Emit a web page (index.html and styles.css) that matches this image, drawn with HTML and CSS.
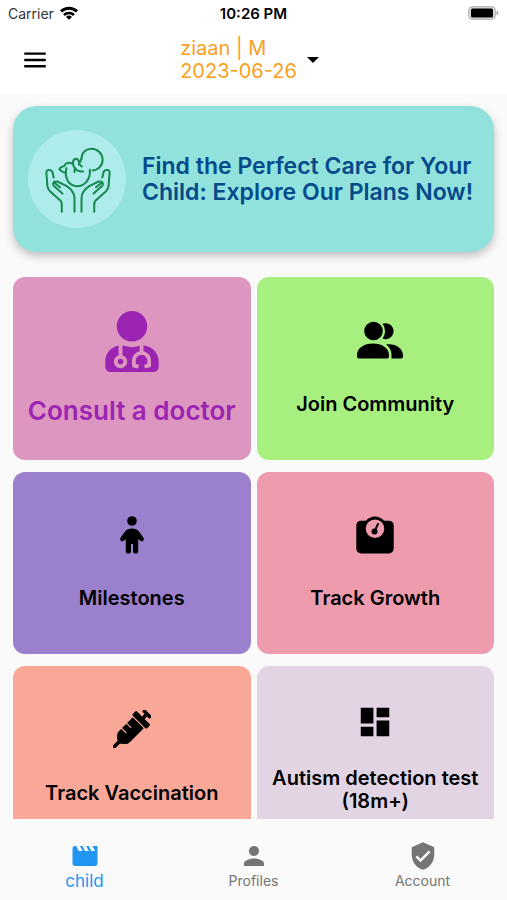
FILE: index.html
```html
<!DOCTYPE html>
<html lang="en">
<head>
<meta charset="utf-8">
<meta name="viewport" content="width=device-width, initial-scale=1">
<title>Child</title>
<link rel="stylesheet" href="styles.css">
</head>
<body>
<div class="status">
  <div class="carrier">Carrier
    <svg width="18" height="14" viewBox="0 0 18 14" fill="none" stroke="#000" stroke-width="3"><path d="M1 5.4a11.6 11.6 0 0 1 16 0"/><path d="M4 9a7.2 7.2 0 0 1 10 0" stroke-width="2.6"/><path d="M9 13.8 6 10.9a4.3 4.3 0 0 1 6 0z" fill="#000" stroke="none"/></svg>
  </div>
  <div class="time">10:26 PM</div>
  <div class="battery">
    <svg width="31" height="14" viewBox="0 0 31 14"><rect x=".7" y=".7" width="26.6" height="12.6" rx="3.6" fill="#ddd" stroke="#aaa"/><rect x="3" y="2.4" width="22" height="9.2" rx="1.6"/><path d="M28.5 4.5c2.6.8 2.6 4.2 0 5z" fill="#aaa"/></svg>
  </div>
</div>
<header class="bar">
  <button class="plain menu" aria-label="Menu">
    <svg width="22" height="16" viewBox="0 0 22 16" stroke="#000" stroke-width="2.4" stroke-linecap="round"><path d="M1.2 1.6h19.6M1.2 8h19.6M1.2 14.2h19.6"/></svg>
  </button>
  <button class="plain picker">
    <span>ziaan | M<br>2023-06-26</span>
    <svg width="12" height="6" viewBox="0 0 12 6"><path d="M0 0h12L6 6z"/></svg>
  </button>
</header>
<main class="content">
  <a class="banner" href="#plans">
    <span class="badge">
      <svg width="67" height="67" viewBox="130 150 200 200" fill="none" stroke="#16894f" stroke-width="6" stroke-linecap="round" stroke-linejoin="round">
        <path d="M242 188C242 168 256 158 272 158A33 33 0 0 1 305 191C305 208 292 222 275 223"/>
        <path d="M267 221C269 249 252 270 228 270C203 269 190 243 197 216"/>
        <path d="M192 229C184 231 183 222 176 220C176 213 184 212 190 210C193 202 204 196 214 203"/>
        <path d="M221 228L222 215C213 206 215 188 226 188C235 188 234 199 236 205L243 211M222 215C228 225 238 227 247 226M234 205C237 198 240 193 242 188"/>
        <g id="hand"><path d="M159 244L155 227C151 220 138 220 137 228L140 268C141 276 143 280 147 284L178 312C182 316 183 318 183 324V346"/><path d="M185 292L159 269C154 260 160 255 170 256L198 270C214 281 221 290 221 305V346M159 258L178 273"/></g>
        <use href="#hand" transform="translate(463 0) scale(-1 1)"/>
      </svg>
    </span>
    <span class="pitch">Find the Perfect Care for Your Child: Explore Our Plans Now!</span>
  </a>
  <nav class="grid" aria-label="Services">
    <a class="card consult" href="#consult">
      <svg width="54" height="61" viewBox="0 0 448 512"><path d="M224 256c70.7 0 128-57.3 128-128S294.7 0 224 0 96 57.3 96 128s57.3 128 128 128zM104 424c0 13.3 10.7 24 24 24s24-10.7 24-24-10.7-24-24-24-24 10.7-24 24zm216-135.4v49c36.5 7.4 64 39.8 64 78.4v41.7c0 7.6-5.4 14.2-12.9 15.7l-32.2 6.4c-4.3.9-8.5-1.9-9.4-6.3l-3.1-15.7c-.9-4.3 1.9-8.6 6.3-9.4l19.3-3.9V416c0-62.8-96-65.1-96 1.9v26.7l19.3 3.9c4.3.9 7.1 5.1 6.3 9.4l-3.1 15.7c-.9 4.3-5.1 7.1-9.4 6.3l-31.2-4.2c-7.9-1.1-13.8-7.8-13.8-15.9V416c0-38.6 27.5-70.9 64-78.4v-45.2c-2.2.7-4.4 1.1-6.6 1.9-18 6.3-37.3 9.8-57.4 9.8s-39.4-3.5-57.4-9.8c-7.4-2.6-14.9-4.2-22.6-5.2v81.6c23.1 6.9 40 28.1 40 53.4 0 30.9-25.1 56-56 56s-56-25.1-56-56c0-25.3 16.9-46.5 40-53.4v-80.4C48.5 301 0 355.8 0 422.4v44.8C0 491.9 20.1 512 44.8 512h358.4c24.7 0 44.8-20.1 44.8-44.8v-44.8c0-72-56.8-130.3-128-133.8z"/></svg>
      <span>Consult a doctor</span>
    </a>
    <a class="card community" href="#community">
      <svg width="56" height="38" viewBox="-10 0 56 38"><circle cx="16.5" cy="10" r="9.3"/><path d="M2 37.500C.7 37.500 0 36.800 0 35.500V34C0 27 7 22.500 16 22.500S32 27 32 34v1.500c0 1.300-.7 2-2 2zM25.500 2.800a8 8 0 1 1 0 14.800 12 12 0 0 0 0-14.800zM29 23.500c9-1.500 17 3.500 17 11v1c0 1.300-.7 2-2 2h-9.500V34c0-4.500-2-8-5.500-10.500z"/></svg>
      <span>Join Community</span>
    </a>
    <a class="card milestones" href="#milestones">
      <svg width="24" height="38" viewBox="0 0 24 38"><circle cx="12" cy="5" r="4.8"/><path d="M12 12.500c3 0 5.500 1 7 3l4.300 6c1.900 3-1.600 5-3.600 2.800L18.200 23v12a2.600 2.600 0 0 1-5.200 0v-7h-2v7a2.600 2.600 0 0 1-5.200 0V23l-1.500 1.300C2.300 26.500-1.200 24.500.7 21.500l4.300-6c1.500-2 4-3 7-3z"/></svg>
      <span>Milestones</span>
    </a>
    <a class="card growth" href="#growth">
      <svg width="38" height="38" viewBox="0 0 38 38"><path fill-rule="evenodd" d="M5 4.700h4.800a12.400 12.400 0 0 1 18.400 0H33a4.700 4.700 0 0 1 4.700 4.700v23.400a4.700 4.700 0 0 1-4.700 4.700H5a4.700 4.700 0 0 1-4.700-4.700V9.400A4.700 4.700 0 0 1 5 4.700zM19 3.400a9.300 9.300 0 1 0 0 18.600 9.300 9.300 0 0 0 0-18.600z"/><circle cx="18.500" cy="15.500" r="3"/><path d="M18.800 15 22 8" stroke="#000" stroke-width="2" stroke-linecap="round"/></svg>
      <span>Track Growth</span>
    </a>
    <a class="card vaccination" href="#vaccination">
      <svg width="38" height="38" viewBox="0 0 512 512" stroke="#000" stroke-width="16" stroke-linejoin="round"><path d="M201.500 174.800l55.700 55.800c3.100 3.100 3.100 8.200 0 11.300l-11.300 11.300c-3.100 3.100-8.200 3.100-11.300 0l-55.700-55.800-45.300 45.300 55.800 55.800c3.100 3.100 3.100 8.200 0 11.300l-11.300 11.300c-3.100 3.100-8.200 3.100-11.300 0L111 265.200l-26.400 26.400c-17.300 17.300-25.600 41.100-23 65.400l7.100 63.600L2.300 487c-3.100 3.100-3.100 8.200 0 11.300l11.300 11.300c3.100 3.100 8.200 3.100 11.300 0l66.300-66.300 63.600 7.100c23.900 2.600 47.900-5.400 65.400-23l181.900-181.900-135.700-135.700-64.900 65zm308.200-93.300L430.500 2.300c-3.100-3.100-8.200-3.100-11.300 0l-11.300 11.300c-3.100 3.100-3.100 8.200 0 11.300l28.300 28.300-45.300 45.300-56.600-56.600-17-17c-3.100-3.100-8.200-3.100-11.300 0l-33.900 33.900c-3.100 3.100-3.100 8.200 0 11.300l17 17L424.800 223l17 17c3.100 3.100 8.200 3.100 11.300 0l33.900-34c3.100-3.100 3.100-8.200 0-11.300l-73.500-73.500 45.300-45.300 28.300 28.300c3.100 3.100 8.200 3.100 11.300 0l11.300-11.300c3.100-3.200 3.100-8.200 0-11.400z"/></svg>
      <span>Track Vaccination</span>
    </a>
    <a class="card autism" href="#autism">
      <svg width="38" height="38" viewBox="0 0 24 24"><path d="M3 13h8V3H3zm0 8h8v-6H3zm10 0h8V11h-8zm0-18v6h8V3z"/></svg>
      <span>Autism detection test (18m+)</span>
    </a>
  </nav>
</main>
<nav class="tabs" aria-label="Main">
  <a class="tab active" href="#child" aria-current="page">
    <svg width="30" height="30" viewBox="0 0 24 24"><path d="M18 4l2 4h-3l-2-4h-2l2 4h-3l-2-4H8l2 4H7L5 4H4c-1.100 0-1.990.9-1.990 2L2 18c0 1.100.9 2 2 2h16c1.100 0 2-.9 2-2V4z"/></svg>
    <span>child</span>
  </a>
  <a class="tab" href="#profiles">
    <svg width="30" height="30" viewBox="0 0 24 24"><path d="M12 12c2.210 0 4-1.790 4-4s-1.790-4-4-4-4 1.790-4 4 1.790 4 4 4zm0 2c-2.670 0-8 1.340-8 4v2h16v-2c0-2.660-5.330-4-8-4z"/></svg>
    <span>Profiles</span>
  </a>
  <a class="tab" href="#account">
    <svg width="30" height="30" viewBox="0 0 24 24"><path d="M12 1L3 5v6c0 5.550 3.840 10.740 9 12 5.160-1.260 9-6.450 9-12V5zm-2 16l-4-4 1.410-1.410L10 14.170l6.590-6.590L18 9z"/></svg>
    <span>Account</span>
  </a>
</nav>
</body>
</html>
```
FILE: styles.css
```css
* { box-sizing: border-box; }

body {
  margin: 0;
  height: 100vh;
  display: flex;
  flex-direction: column;
  background: #fafafa;
  color: #000;
  font-family: Inter, "Liberation Sans", sans-serif;
}

a { color: inherit; text-decoration: none; }
svg { display: block; flex: none; }

.plain {
  border: 0;
  padding: 0;
  background: none;
  font: inherit;
  color: inherit;
}

.status {
  display: grid;
  grid-template-columns: 1fr auto 1fr;
  align-items: center;
  height: 26px;
  padding: 0 8px;
  background: #fff;
  font-size: 14px;
}

.carrier { display: flex; align-items: center; gap: 6px; color: #333; }
.time { font-size: 15px; font-weight: 600; }
.battery { justify-self: end; }

.bar {
  display: grid;
  grid-template-columns: 1fr auto 1fr;
  align-items: center;
  height: 68px;
  padding: 0 32px 0 24px;
  background: #fff;
}

.menu { justify-self: start; }

.plain.picker {
  display: flex;
  align-items: center;
  gap: 10px;
  color: #f9a01f;
  font-size: 20px;
  line-height: 23px;
  text-align: left;
}

.content {
  flex: 1;
  min-height: 0;
  overflow-y: auto;
  scrollbar-width: none;
  padding: 12px 13px 0;
}

.banner {
  display: flex;
  align-items: center;
  gap: 16px;
  min-height: 146px;
  padding: 0 15px;
  border-radius: 24px;
  background: #91e2dc;
  box-shadow: 0 4px 10px rgba(0, 0, 0, 0.24);
}

.badge {
  display: grid;
  place-items: center;
  flex: none;
  width: 98px;
  height: 98px;
  border-radius: 50%;
  background: #aeecec;
}

.pitch {
  color: #04498a;
  font-size: 23px;
  font-weight: 600;
  line-height: 26px;
}

.grid {
  display: grid;
  grid-template-columns: 1fr 1fr;
  gap: 12px 6px;
  margin-top: 25px;
}

.card {
  display: flex;
  flex-direction: column;
  align-items: center;
  justify-content: space-evenly;
  aspect-ratio: 13 / 10;
  padding: 10px;
  border-radius: 12px;
  font-size: 20px;
  font-weight: 600;
  line-height: 23px;
  text-align: center;
}

.consult {
  background: #dc96bf;
  color: #9c24b2;
  fill: #9c24b2;
  font-size: 26px;
  line-height: 31px;
}

.community { background: #a7f080; }
.milestones { background: #9b80cd; }
.growth { background: #ee9bad; }
.vaccination { background: #f9a898; }
.autism { background: #e2d4e3; }

.tabs {
  display: grid;
  grid-template-columns: repeat(3, 1fr);
  height: 81px;
  padding-top: 22px;
}

.tab {
  display: flex;
  flex-direction: column;
  align-items: center;
  color: #757575;
  fill: #757575;
  font-size: 14px;
  line-height: 20px;
}

.active {
  color: #2196f3;
  fill: #2196f3;
  font-size: 17px;
}
```
